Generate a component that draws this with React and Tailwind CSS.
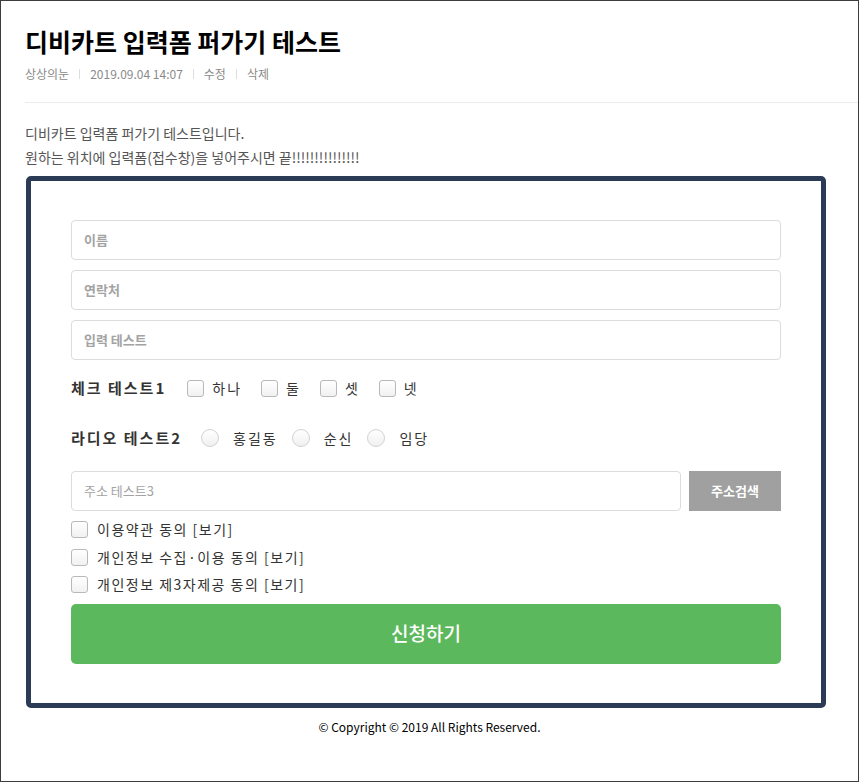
import React from "react";

const font = { fontFamily: '"Noto Sans CJK KR", "Noto Sans", sans-serif' };

function Box() {
  return (
    <span className="inline-block w-[17px] h-[17px] shrink-0 rounded-[3px] border border-[#b9b9b9] bg-gradient-to-b from-white to-[#f1f1f1]" />
  );
}

function Radio() {
  return (
    <span className="inline-block w-[18px] h-[18px] shrink-0 rounded-full border border-[#d2d2d2] bg-gradient-to-b from-white to-[#f0f0f0]" />
  );
}

function Field({ placeholder }) {
  return (
    <div className="h-10 rounded-[4px] border border-[#dcdcdc] flex items-center px-3 text-[13px] font-bold text-[#a3a3a3]">
      {placeholder}
    </div>
  );
}

export default function App() {
  const checks = ["하나", "둘", "셋", "넷"];
  const radios = ["홍길동", "순신", "임당"];
  const agrees = [
    "이용약관 동의 [보기]",
    "개인정보 수집·이용 동의 [보기]",
    "개인정보 제3자제공 동의 [보기]",
  ];

  return (
    <div
      className="w-[859px] h-[782px] border border-[#3d3d3d] bg-white overflow-hidden text-[#333]"
      style={font}
    >
      {/* HEADER */}
      <div className="pl-[24px] pt-[20px]">
        <h1 className="text-[25px] font-bold leading-[40px] text-black">
          디비카트 입력폼 퍼가기 테스트
        </h1>
        <div className="flex items-center text-[12px] text-[#8a8a8a] leading-[20px] mt-[3px]">
          <span>상상의눈</span>
          <span className="mx-[10px] h-[10px] w-px bg-[#dedede]" />
          <span>2019.09.04 14:07</span>
          <span className="mx-[10px] h-[10px] w-px bg-[#dedede]" />
          <span>수정</span>
          <span className="mx-[10px] h-[10px] w-px bg-[#dedede]" />
          <span>삭제</span>
        </div>
        <div className="mt-[18px] border-t border-[#ececec]" />
      </div>

      {/* BODY */}
      <div className="pl-[24px] pt-[18px] text-[14px] leading-[24px] text-[#555]">
        <p>디비카트 입력폼 퍼가기 테스트입니다.</p>
        <p>원하는 위치에 입력폼(접수창)을 넣어주시면 끝!!!!!!!!!!!!!!!</p>
      </div>

      {/* FORM */}
      <div className="ml-[25px] mt-[7px] w-[800px] border-[5px] border-[#2b3a55] rounded-[5px] px-10 pt-[39px] pb-[39px]">
        <div className="flex flex-col gap-[10px]">
          <Field placeholder="이름" />
          <Field placeholder="연락처" />
          <Field placeholder="입력 테스트" />
        </div>

        <div className="flex items-center h-[28px] mt-[14px]">
          <span className="text-[15px] font-bold tracking-[2px] mr-[21px]">체크 테스트1</span>
          {checks.map((c) => (
            <label key={c} className="flex items-center mr-[19px] text-[14px]">
              <Box />
              <span className="ml-[8px] tracking-[2px]">{c}</span>
            </label>
          ))}
        </div>

        <div className="flex items-center h-[28px] mt-[22px]">
          <span className="text-[15px] font-bold tracking-[2px] mr-[19px]">라디오 테스트2</span>
          {radios.map((r) => (
            <label key={r} className="flex items-center mr-[14px] text-[14px]">
              <Radio />
              <span className="ml-[14px] tracking-[2px]">{r}</span>
            </label>
          ))}
        </div>

        <div className="flex gap-[8px] mt-[19px]">
          <div className="flex-1 h-10 rounded-[4px] border border-[#dcdcdc] flex items-center px-3 text-[13px] text-[#a3a3a3]">
            주소 테스트3
          </div>
          <button className="w-[92px] h-10 bg-[#a0a0a0] text-white text-[13px] font-bold">
            주소검색
          </button>
        </div>

        <div className="flex flex-col mt-[5px]">
          {agrees.map((a) => (
            <label key={a} className="flex items-center h-[27.5px] text-[14px]">
              <Box />
              <span className="ml-[9px] tracking-[1.5px]">{a}</span>
            </label>
          ))}
        </div>

        <button className="mt-[5px] w-full h-[60px] rounded-[5px] bg-[#5cb85c] text-white text-[19px] font-medium">
          신청하기
        </button>
      </div>

      {/* FOOTER */}
      <p className="text-center text-[12px] text-black mt-[11px] leading-[16px]">
        © Copyright © 2019 All Rights Reserved.
      </p>
    </div>
  );
}
